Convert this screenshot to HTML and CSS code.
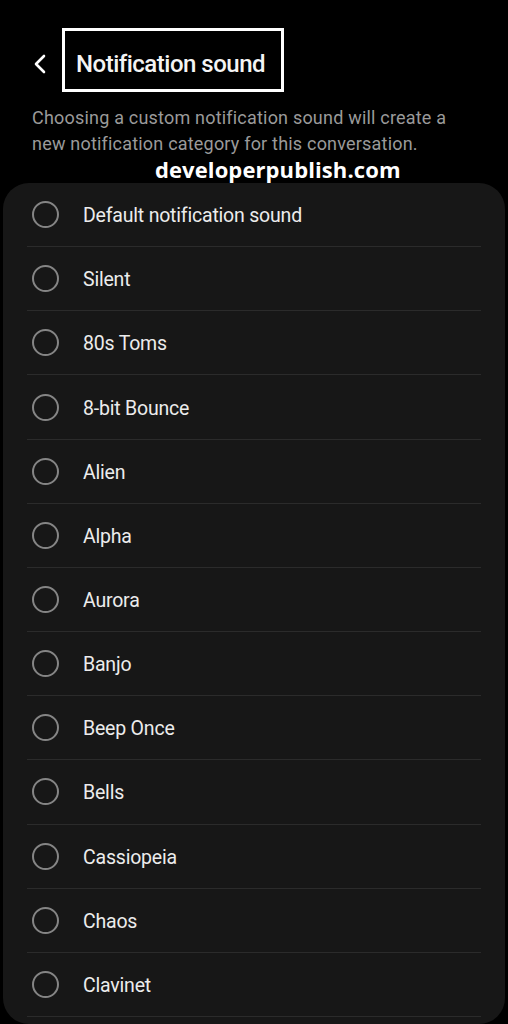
FILE: index.html
```html
<!DOCTYPE html>
<html>
<head>
<meta charset="utf-8">
<link rel="stylesheet" href="styles.css">
</head>
<body>
<div class="page">
  <header class="header">
    <svg class="back" width="14" height="20" viewBox="0 0 14 20"><path d="M11 2 L3 10 L11 18" fill="none" stroke="#fff" stroke-width="2.6" stroke-linecap="round" stroke-linejoin="round"/></svg>
    <div class="title-box"><h1 class="title">Notification sound</h1></div>
  </header>
  <p class="desc">Choosing a custom notification sound will create a new notification category for this conversation.</p>
  <div class="watermark">developerpublish.com</div>
  <div class="card">
    <div class="row"><span class="radio"></span><span class="label">Default notification sound</span></div>
    <div class="row"><span class="radio"></span><span class="label">Silent</span></div>
    <div class="row"><span class="radio"></span><span class="label">80s Toms</span></div>
    <div class="row"><span class="radio"></span><span class="label">8-bit Bounce</span></div>
    <div class="row"><span class="radio"></span><span class="label">Alien</span></div>
    <div class="row"><span class="radio"></span><span class="label">Alpha</span></div>
    <div class="row"><span class="radio"></span><span class="label">Aurora</span></div>
    <div class="row"><span class="radio"></span><span class="label">Banjo</span></div>
    <div class="row"><span class="radio"></span><span class="label">Beep Once</span></div>
    <div class="row"><span class="radio"></span><span class="label">Bells</span></div>
    <div class="row"><span class="radio"></span><span class="label">Cassiopeia</span></div>
    <div class="row"><span class="radio"></span><span class="label">Chaos</span></div>
    <div class="row"><span class="radio"></span><span class="label">Clavinet</span></div>
  </div>
</div>
</body>
</html>
```
FILE: styles.css
```css
html, body {
  margin: 0;
  padding: 0;
  background: #000;
  height: 1024px;
  overflow: hidden;
}
.page {
  font-family: Roboto, "Noto Sans", sans-serif;
  color: #ececec;
}
.header {
  display: flex;
  align-items: center;
  padding-top: 28px;
  height: 64px;
}
.back {
  margin-left: 33px;
  margin-right: 15px;
  margin-top: 8px;
}
.title-box {
  box-sizing: border-box;
  width: 222px;
  height: 64px;
  border: 3px solid #fff;
  display: flex;
  align-items: center;
  padding-left: 11px;
  padding-top: 7px;
}
.title {
  margin: 0;
  font-size: 24px;
  font-weight: 500;
  color: #f4f4f4;
  letter-spacing: -0.5px;
}
.desc {
  margin: 13px 30px 0 32px;
  font-size: 18px;
  line-height: 26px;
  letter-spacing: 0.2px;
  color: #9a9a9a;
}
.watermark {
  margin-left: 155px;
  font-family: "Open Sans", "Noto Sans", sans-serif;
  font-weight: 700;
  font-size: 22px;
  line-height: 24px;
  letter-spacing: 0.1px;
  color: #fff;
}
.card {
  margin: 2px 3px 0;
  background: #171717;
  border-radius: 26px;
  padding-bottom: 7px;
}
.row {
  box-sizing: border-box;
  height: 64.17px;
  margin: 0 24px;
  border-bottom: 1px solid #2b2b2b;
  display: flex;
  align-items: center;
  padding-left: 5px;
}
.radio {
  box-sizing: border-box;
  width: 27px;
  height: 27px;
  border: 2px solid #858585;
  border-radius: 50%;
  flex: none;
}
.label {
  margin-left: 24px;
  padding-top: 2px;
  font-size: 19.5px;
  letter-spacing: -0.2px;
  color: #ececec;
}
```
